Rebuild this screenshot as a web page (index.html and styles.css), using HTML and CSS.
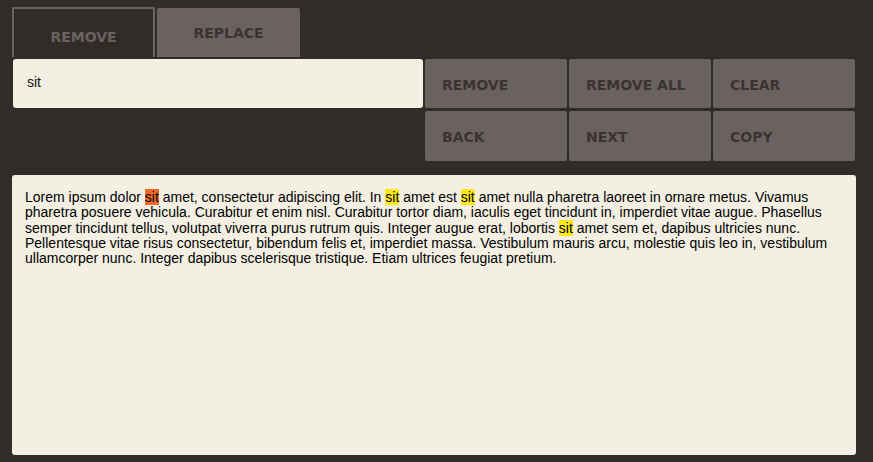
FILE: index.html
```html
<!DOCTYPE html>
<html>
<head>
<meta charset="utf-8">
<link rel="stylesheet" href="styles.css">
</head>
<body>
<div class="app">
  <div class="tabs">
    <div class="tab tab-active">REMOVE</div>
    <div class="tab">REPLACE</div>
  </div>
  <div class="controls">
    <div class="search">sit</div>
    <div class="buttons">
      <div class="btn">REMOVE</div>
      <div class="btn">REMOVE ALL</div>
      <div class="btn">CLEAR</div>
      <div class="btn">BACK</div>
      <div class="btn">NEXT</div>
      <div class="btn">COPY</div>
    </div>
  </div>
  <div class="text">Lorem ipsum dolor <span class="hl hl-current">sit</span> amet, consectetur adipiscing elit. In <span class="hl">sit</span> amet est <span class="hl">sit</span> amet nulla pharetra laoreet in ornare metus. Vivamus pharetra posuere vehicula. Curabitur et enim nisl. Curabitur tortor diam, iaculis eget tincidunt in, imperdiet vitae augue. Phasellus semper tincidunt tellus, volutpat viverra purus rutrum quis. Integer augue erat, lobortis <span class="hl">sit</span> amet sem et, dapibus ultricies nunc. Pellentesque vitae risus consectetur, bibendum felis et, imperdiet massa. Vestibulum mauris arcu, molestie quis leo in, vestibulum ullamcorper nunc. Integer dapibus scelerisque tristique. Etiam ultrices feugiat pretium.</div>
</div>
</body>
</html>
```

FILE: styles.css
```css
html, body {
  margin: 0;
  padding: 0;
  background: #322c29;
  height: 100%;
}
.app {
  box-sizing: border-box;
  height: 462px;
  padding: 7px 17px 7px 12px;
  display: flex;
  flex-direction: column;
  font-family: "Liberation Sans", Arial, sans-serif;
}
.tabs {
  display: flex;
  gap: 2px;
  height: 50px;
  align-items: flex-end;
}
.tab {
  box-sizing: border-box;
  width: 143px;
  height: 49px;
  background: #6a6260;
  color: #3a3330;
  border-radius: 2px 2px 0 0;
  font-family: "DejaVu Sans", sans-serif;
  font-weight: 900;
  font-size: 14px;
  display: flex;
  align-items: center;
  justify-content: center;
  padding-bottom: 0;
}
.tab-active {
  height: 50px;
  background: #322c29;
  color: #6a6260;
  border: 2px solid #6a6260;
  border-bottom: none;
  padding-top: 8px;
}
.controls {
  display: flex;
  gap: 2px;
  margin-top: 2px;
  padding-left: 1px;
}
.search {
  box-sizing: border-box;
  width: 410px;
  height: 49px;
  background: #f3f0e3;
  border-radius: 3px;
  padding: 15px 14px 0;
  font-size: 14px;
  color: #111;
}
.buttons {
  display: grid;
  grid-template-columns: repeat(3, 142px);
  grid-auto-rows: 49px;
  gap: 3px 2px;
  margin-bottom: -1px;
}
.btn {
  background: #6a6260;
  color: #3a3330;
  border-radius: 2px;
  font-family: "DejaVu Sans", sans-serif;
  font-weight: 900;
  font-size: 14px;
  display: flex;
  align-items: center;
  padding-left: 17px;
  padding-top: 2px;
}
.btn:nth-child(n+4) {
  height: 48px;
}
.text {
  flex: 1;
  margin-top: 16px;
  background: #f3f0e3;
  border-radius: 3px;
  padding: 15px 13px 13px;
  font-size: 14px;
  line-height: 15.3px;
  color: #000;
}
.hl {
  background: #ffe81a;
}
.hl-current {
  background: #f26a2a;
}
```
